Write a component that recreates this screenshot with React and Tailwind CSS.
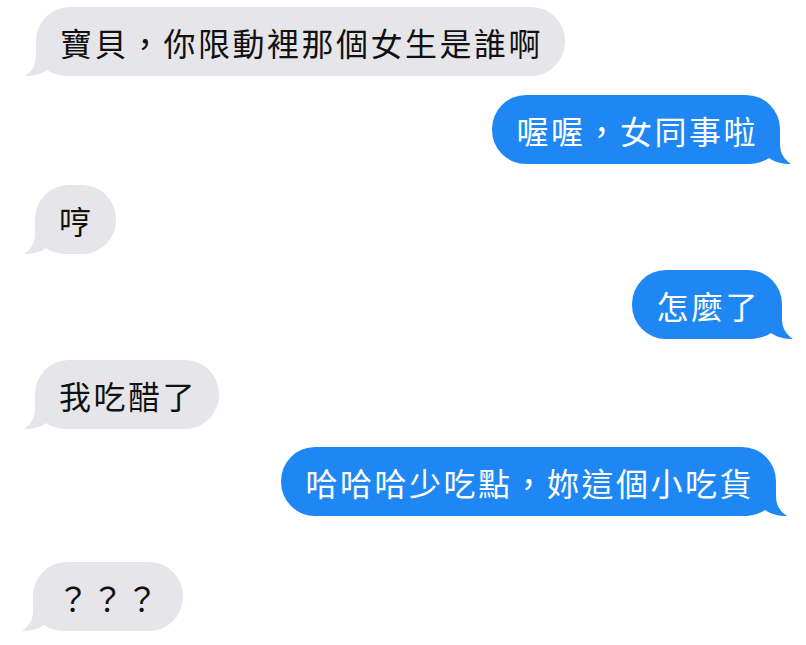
const messages = [
  { side: 'left', text: '寶貝，你限動裡那個女生是誰啊', mt: 'mt-[7px]', ml: 'ml-[36px]' },
  { side: 'right', text: '喔喔，女同事啦', mt: 'mt-[19px]', mr: 'mr-[26px]' },
  { side: 'left', text: '哼', mt: 'mt-[21px]', ml: 'ml-[35px]' },
  { side: 'right', text: '怎麼了', mt: 'mt-[16px]', mr: 'mr-[24px]' },
  { side: 'left', text: '我吃醋了', mt: 'mt-[21px]', ml: 'ml-[35px]' },
  { side: 'right', text: '哈哈哈少吃點，妳這個小吃貨', mt: 'mt-[18px]', mr: 'mr-[30px]' },
  { side: 'left', text: '？？？', mt: 'mt-[46px]', ml: 'ml-[33px]' },
];

function Tail({ side }) {
  const fill = side === 'left' ? '#e5e5ea' : '#1f87f4';
  return (
    <svg
      width="46"
      height="34"
      viewBox="0 0 46 34"
      className={
        side === 'left'
          ? 'absolute bottom-0 left-[-11px]'
          : 'absolute bottom-0 right-[-11px] scale-x-[-1]'
      }
    >
      <path
        d="M11 2 L11 14 C11 24 6 30 0 34 C9 34 16 32 22 28 C28 32 35 34 46 34 L46 2 Z"
        fill={fill}
      />
    </svg>
  );
}

function Bubble({ side, text }) {
  const isLeft = side === 'left';
  return (
    <div
      className={`relative h-[69px] flex items-center pl-[24px] pr-[22px] rounded-[34px] ${
        isLeft ? 'bg-[#e5e5ea] text-[#111111]' : 'bg-[#1f87f4] text-white'
      }`}
    >
      <Tail side={side} />
      <span className="relative text-[32px] font-normal leading-none tracking-[2.5px] whitespace-nowrap">{text}</span>
    </div>
  );
}

export default function App() {
  return (
    <div
      className="w-[806px] h-[645px] bg-white overflow-hidden flex flex-col"
      style={{ fontFamily: '"Noto Sans CJK TC", "Noto Sans", sans-serif' }}
    >
      {messages.map((m, i) => (
        <div
          key={i}
          className={`flex ${m.mt} ${m.side === 'left' ? `justify-start ${m.ml}` : `justify-end ${m.mr}`}`}
        >
          <Bubble side={m.side} text={m.text} />
        </div>
      ))}
    </div>
  );
}
